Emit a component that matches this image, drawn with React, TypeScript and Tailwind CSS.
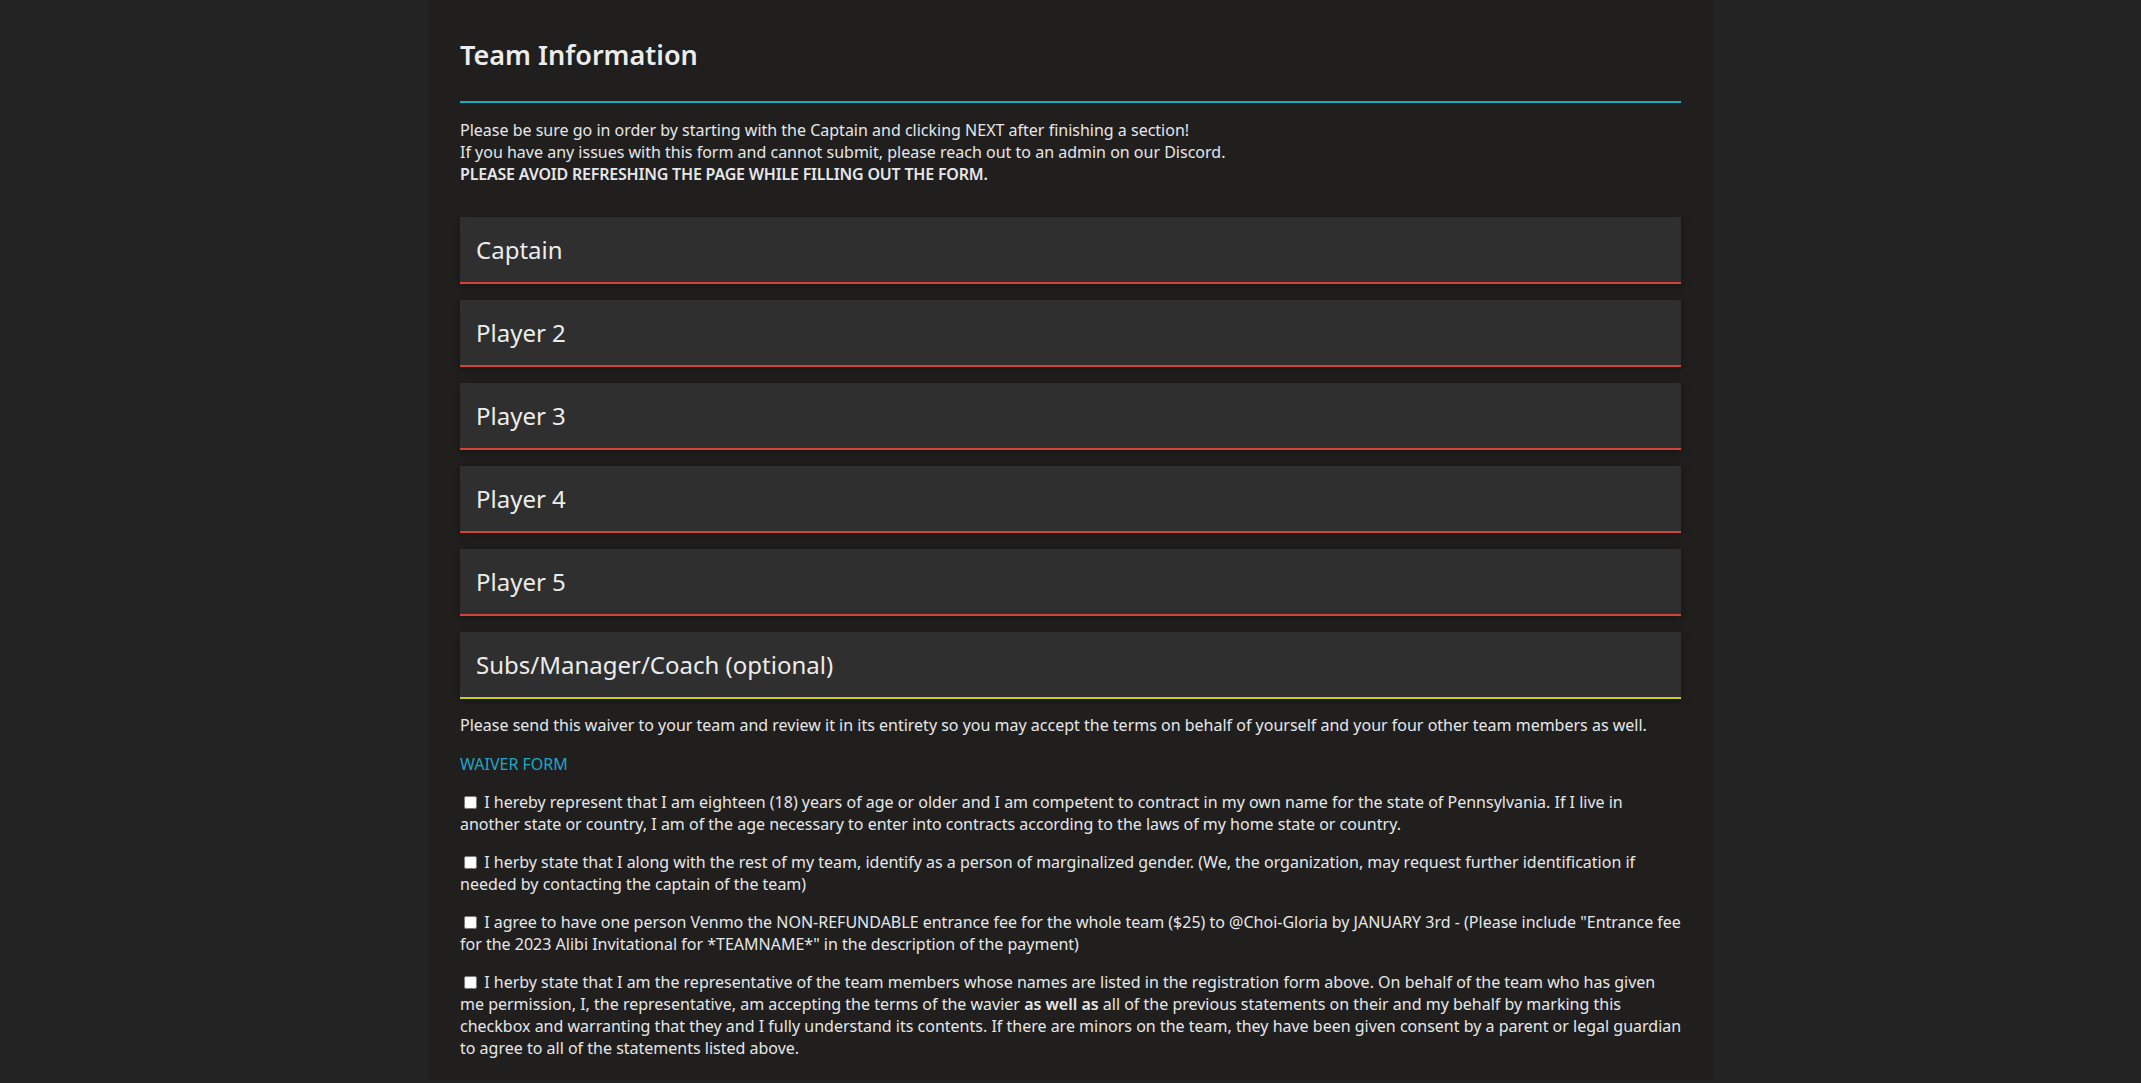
import React from "react";

const sections = [
  { name: "Captain", line: "border-[#d6413b]" },
  { name: "Player 2", line: "border-[#d6413b]" },
  { name: "Player 3", line: "border-[#d6413b]" },
  { name: "Player 4", line: "border-[#d6413b]" },
  { name: "Player 5", line: "border-[#d6413b]" },
  { name: "Subs/Manager/Coach (optional)", line: "border-[#cdcb1f]" },
];

const Check = () => (
  <input type="checkbox" className="m-[3px_3px_3px_4px] w-[13px] h-[13px] align-[-1px]" />
);

const App = () => {
  return (
    <div
      className="min-h-screen bg-[#232323] text-[#e6e7ea]"
      style={{ fontFamily: '"Noto Sans", "Open Sans", sans-serif' }}
    >
      <div className="w-[1285px] mx-auto bg-[#201f1e] px-8 pt-[37px] pb-[21px]">
        {/* Header */}
        <h1 className="text-[27px] leading-[36px] font-semibold text-[#ececec]">Team Information</h1>
        <div className="mt-[28px] h-[2px] bg-[#1fa7c6]" />

        <div className="mt-4 text-[16px] leading-[22px]">
          <p>Please be sure go in order by starting with the Captain and clicking NEXT after finishing a section!</p>
          <p>If you have any issues with this form and cannot submit, please reach out to an admin on our Discord.</p>
          <p className="font-semibold tracking-[-0.2px]">PLEASE AVOID REFRESHING THE PAGE WHILE FILLING OUT THE FORM.</p>
        </div>

        {/* Sections */}
        <div className="mt-8 flex flex-col gap-4">
          {sections.map((s) => (
            <div
              key={s.name}
              className={`bg-[#2f2f2f] border-b-2 ${s.line} pl-4 pt-[15px] pb-[14px] shadow-[0_2px_8px_rgba(0,0,0,0.35)] cursor-pointer`}
            >
              <span className="text-[24px] leading-[36px] text-[#ececec]">{s.name}</span>
            </div>
          ))}
        </div>

        {/* Waiver */}
        <div className="text-[16px] leading-[22px]">
          <p className="mt-[15px]">
            Please send this waiver to your team and review it in its entirety so you may accept the terms on behalf of yourself and your four other team members as well.
          </p>
          <p className="mt-[17px]">
            <a href="#" className="text-[#1fa7c6]">WAIVER FORM</a>
          </p>
          <p className="mt-4">
            <Check /> I hereby represent that I am eighteen (18) years of age or older and I am competent to contract in my own name for the state of Pennsylvania. If I live in another state or country, I am of the age necessary to enter into contracts according to the laws of my home state or country.
          </p>
          <p className="mt-4">
            <Check /> I herby state that I along with the rest of my team, identify as a person of marginalized gender. (We, the organization, may request further identification if needed by contacting the captain of the team)
          </p>
          <p className="mt-4">
            <Check /> I agree to have one person Venmo the NON-REFUNDABLE entrance fee for the whole team ($25) to @Choi-Gloria by JANUARY 3rd - (Please include "Entrance fee for the 2023 Alibi Invitational for *TEAMNAME*" in the description of the payment)
          </p>
          <p className="mt-4 -mr-[4px]">
            <Check /> I herby state that I am the representative of the team members whose names are listed in the registration form above. On behalf of the team who has given
            <br />
            me permission, I, the representative, am accepting the terms of the wavier <span className="font-semibold">as well as</span> all of the previous statements on their and my behalf by marking this checkbox and warranting that they and I fully understand its contents. If there are minors on the team, they have been given consent by a parent or legal guardian to agree to all of the statements listed above.
          </p>
        </div>
      </div>
    </div>
  );
};

export default App;
